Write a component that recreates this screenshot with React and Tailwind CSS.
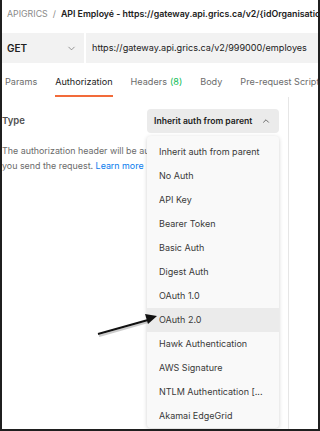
import React from 'react';
import { ChevronDown, ChevronUp } from 'lucide-react';

export default function App() {
  const authTypes = [
    'Inherit auth from parent',
    'No Auth',
    'API Key',
    'Bearer Token',
    'Basic Auth',
    'Digest Auth',
    'OAuth 1.0',
    'OAuth 2.0',
    'Hawk Authentication',
    'AWS Signature',
    'NTLM Authentication [...',
    'Akamai EdgeGrid',
  ];

  const tabs = [
    { label: 'Params' },
    { label: 'Authorization', active: true },
    { label: 'Headers', count: '(8)' },
    { label: 'Body' },
    { label: 'Pre-request Script' },
  ];

  return (
    <div className="relative w-[320px] h-[431px] overflow-hidden bg-white border-x-2 border-b-2 border-[#1f1f1f] font-['Inter',sans-serif] text-[#212121] flex flex-col">
      {/* Breadcrumb */}
      <div className="h-[28px] flex items-center pl-[5px] text-[8.8px] whitespace-nowrap overflow-hidden">
        <span className="text-[#8a8a8a]">APIGRICS</span>
        <span className="text-[#8a8a8a] mx-[5px]">/</span>
        <span className="font-semibold text-[#212121]">API Employé - https://gateway.api.grics.ca/v2/{'{'}idOrganisation{'}'}</span>
      </div>

      {/* Request bar */}
      <div className="mt-[5px] h-[30px] flex bg-[#f2f2f2]">
        <div className="w-[82px] flex items-center justify-between pl-[5px] pr-[7px]">
          <span className="font-semibold text-[10px]">GET</span>
          <ChevronDown size={11} strokeWidth={1.5} className="text-[#6b6b6b]" />
        </div>
        <div className="w-[2px] bg-white" />
        <div className="flex-1 flex items-center pl-[6px] text-[9.1px] text-[#212121] whitespace-nowrap overflow-hidden">
          https://gateway.api.grics.ca/v2/999000/employes
        </div>
      </div>

      {/* Tabs */}
      <div className="mt-[6px] h-[28px] flex items-stretch gap-[18px] pl-[3px] text-[9.1px] text-[#6b6b6b] whitespace-nowrap">
        {tabs.map((tab) => (
          <div
            key={tab.label}
            className={`flex items-center border-b-2 ${tab.active ? 'border-[#f26b3a] text-[#212121]' : 'border-transparent'}`}
          >
            {tab.label}
            {tab.count && <span className="ml-[3px] text-[#0cbb52]">{tab.count}</span>}
          </div>
        ))}
      </div>

      {/* Body */}
      <div className="flex-1 flex">
        <div className="w-[286px] pt-[12px]">
          <div className="flex items-center">
            <span className="w-[145px] text-[9.5px] font-semibold text-[#505050]">Type</span>
            <button className="w-[132px] h-[24px] flex items-center justify-between rounded-[4px] bg-[#ebebeb] pl-[7px] pr-[8px] text-[8.6px] font-semibold text-[#212121] whitespace-nowrap">
              Inherit auth from parent
              <ChevronUp size={10} strokeWidth={2} className="text-[#505050]" />
            </button>
          </div>
          <p className="mt-[10px] text-[8.9px] leading-[15px] text-[#6b6b6b] whitespace-nowrap">
            The authorization header will be automatically generated when
            <br />
            you send the request. <span className="text-[#097bed]">Learn more</span>
          </p>
        </div>
        <div className="flex-1 border-l border-[#e6e6e6]" />
      </div>

      {/* Auth type menu */}
      <div className="absolute left-[145px] top-[136px] w-[132px] bottom-[1px] bg-[#f9f9f9] rounded-[4px] shadow-[0_1px_4px_rgba(0,0,0,0.18)] py-[4px]">
        {authTypes.map((type) => (
          <div
            key={type}
            className={`h-[24px] flex items-center pl-[12px] text-[9px] text-[#3a3a3a] whitespace-nowrap ${type === 'OAuth 2.0' ? 'bg-[#ebebeb]' : ''}`}
          >
            {type}
          </div>
        ))}
      </div>

      {/* Annotation arrow */}
      <svg className="absolute left-0 top-0 pointer-events-none" width="320" height="431">
        <line x1="97" y1="336" x2="146" y2="322" stroke="#9a9a9a" strokeWidth="2" opacity="0.5" />
        <line x1="96" y1="334" x2="146" y2="320" stroke="#111" strokeWidth="2" />
        <polygon points="155,316 143,314 146,324" fill="#111" />
      </svg>
    </div>
  );
}
